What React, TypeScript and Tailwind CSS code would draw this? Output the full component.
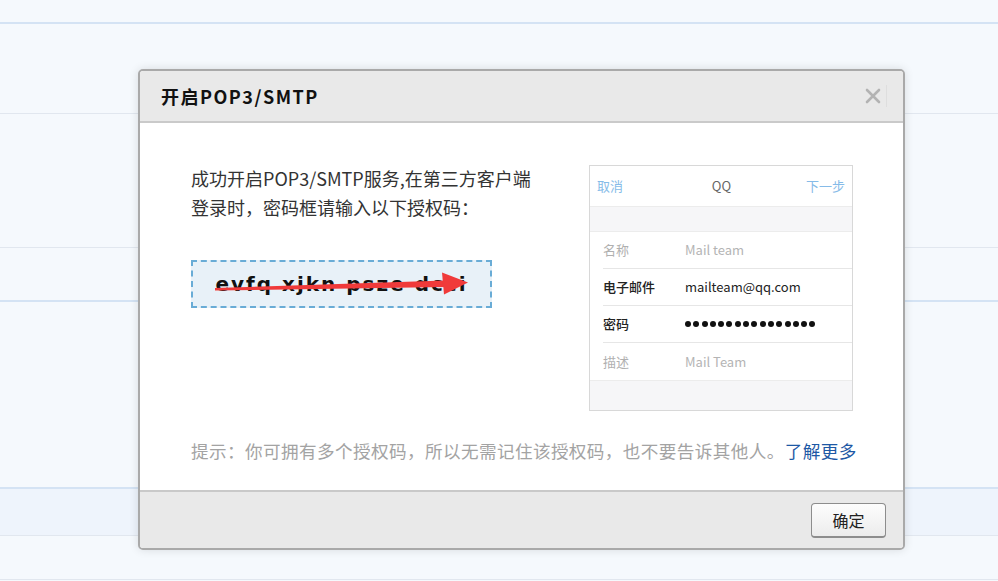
import React from "react";

const cjk = { fontFamily: '"Noto Sans CJK SC", "Noto Sans", sans-serif' };

function Dots() {
  return (
    <div className="flex items-center gap-[2.3px]">
      {Array.from({ length: 16 }).map((_, i) => (
        <span key={i} className="block w-[6px] h-[6px] rounded-full bg-[#111]" />
      ))}
    </div>
  );
}

function PhoneShot() {
  return (
    <div className="w-[264px] h-[246px] border border-[#d8d8d8] bg-[#f6f6f8] flex flex-col text-[13px]" style={cjk}>
      <div className="h-[40px] bg-white flex items-center justify-between px-[7px]">
        <span className="text-[#86bbe8]">取消</span>
        <span className="text-[#666] ml-[14px]">QQ</span>
        <span className="text-[#86bbe8]">下一步</span>
      </div>
      <div className="h-[25px] border-t border-[#ececec]" />
      <div className="bg-white flex flex-col border-y border-[#ececec]">
        {[
          { l: "名称", v: "Mail team", dark: false },
          { l: "电子邮件", v: "mailteam@qq.com", dark: true },
          { l: "密码", v: "", dark: true, dots: true },
          { l: "描述", v: "Mail Team", dark: false },
        ].map((r, i) => (
          <div key={i} className="pl-[13px]">
            <div className={`h-[37px] flex items-center ${i < 3 ? "border-b border-[#e6e6e6]" : ""}`}>
              <span className={`w-[82px] ${r.dark ? "text-[#222] font-medium" : "text-[#b0b0b0]"}`}>{r.l}</span>
              {r.dots ? (
                <Dots />
              ) : (
                <span className={r.dark ? "text-[#222]" : "text-[#b4b4b4]"}>{r.v}</span>
              )}
            </div>
          </div>
        ))}
      </div>
      <div className="flex-1" />
    </div>
  );
}

export default function App() {
  return (
    <div className="relative w-[998px] h-[581px] overflow-hidden bg-[#f5f9fd]" style={cjk}>
      {/* background list rows */}
      <div className="flex flex-col">
        <div className="h-[22px]" />
        <div className="h-[2px] bg-[#d4e3f4]" />
        <div className="h-[89px]" />
        <div className="h-[1px] bg-[#e1e7ef]" />
        <div className="h-[133px]" />
        <div className="h-[1px] bg-[#e1e7ef]" />
        <div className="h-[52px]" />
        <div className="h-[2px] bg-[#d4e3f4]" />
        <div className="h-[185px]" />
        <div className="h-[2px] bg-[#d4e3f4]" />
        <div className="h-[46px] bg-[#eef4fc]" />
        <div className="h-[1px] bg-[#e1e7ef]" />
        <div className="h-[43px]" />
        <div className="h-[1px] bg-[#e1e7ef]" />
      </div>

      {/* modal */}
      <div className="absolute left-[138px] top-[69px] w-[767px] h-[481px] rounded-[5px] border-2 border-[#a9a9a9] bg-white shadow-[0_0_10px_rgba(0,0,0,0.12)] flex flex-col overflow-hidden">
        <div className="h-[52px] bg-[#e9e9e9] border-b-2 border-[#cacaca] flex items-center justify-between pl-[21px] pr-[16px] shrink-0">
          <span className="text-[18px] font-bold text-[#111] tracking-[1.5px]">开启POP3/SMTP</span>
          <div className="flex items-center h-full">
            <svg width="16" height="16" viewBox="0 0 16 16" className="mr-[5px]">
              <path d="M2 2 L14 14 M14 2 L2 14" stroke="#b3b3b3" strokeWidth="2.6" strokeLinecap="round" />
            </svg>
            <div className="w-px h-[22px] bg-[#dedede]" />
          </div>
        </div>

        <div className="flex-1 flex flex-col pl-[51px] pr-[50px] pt-[41px]">
          <div className="flex justify-between">
            <div className="flex flex-col">
              <p className="text-[18px] leading-[29px] text-[#333] w-[360px] whitespace-nowrap">
                成功开启POP3/SMTP服务,在第三方客户端
                <br />
                登录时，密码框请输入以下授权码：
              </p>
              <div className="relative mt-[38px] w-[301px] h-[48px] border-2 border-dashed border-[#69acd6] bg-[#e8f1f8] flex items-center justify-center">
                <span
                  className="text-[20px] font-bold text-[#111] tracking-[2px]"
                  style={{ fontFamily: '"DejaVu Sans", Verdana, sans-serif' }}
                >
                  evfq xjkn psze dcci
                </span>
                <svg className="absolute left-0 top-0" width="301" height="48" viewBox="0 0 301 48">
                  <polygon points="22,26 252,18.5 252,25 22,28.5" fill="#f03a3a" />
                  <polygon points="249,10.5 275,20.5 251,32.5" fill="#f03a3a" />
                </svg>
              </div>
            </div>
            <div className="mt-[1px]">
              <PhoneShot />
            </div>
          </div>
          <div className="mt-[27px] text-[17.6px] text-[#a3a3a3] whitespace-nowrap tracking-[0.4px]">
            提示：你可拥有多个授权码，所以无需记住该授权码，也不要告诉其他人。<span className="text-[#1d58a5]">了解更多</span>
          </div>
        </div>

        <div className="h-[58px] bg-[#e9e9e9] border-t-2 border-[#c9c9c9] flex items-center justify-end pr-[17px] shrink-0">
          <button className="w-[75px] h-[35px] rounded-[4px] border border-[#8d8d8d] border-b-2 bg-gradient-to-b from-[#fdfdfd] to-[#ececec] text-[16px] text-[#222]">
            确定
          </button>
        </div>
      </div>
    </div>
  );
}
